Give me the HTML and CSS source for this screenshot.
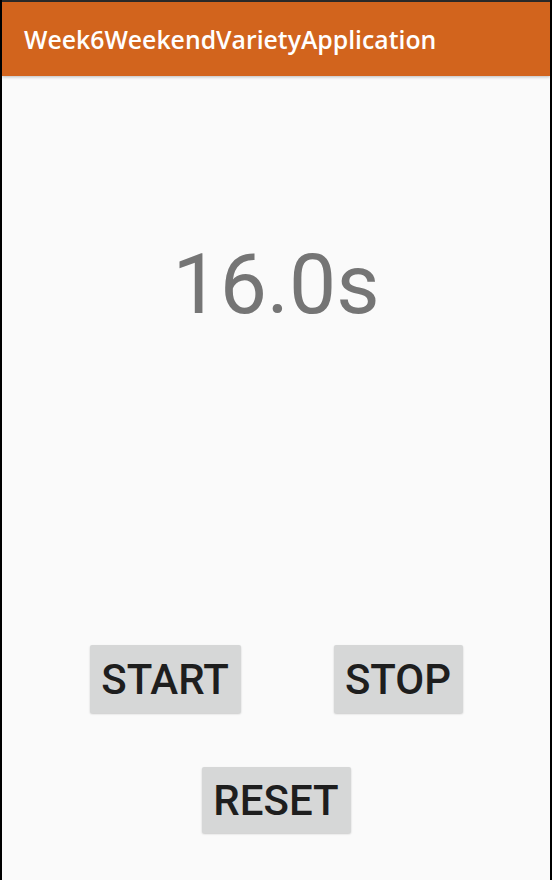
FILE: index.html
```html
<!DOCTYPE html>
<html>
<head>
<meta charset="utf-8">
<link rel="stylesheet" href="styles.css">
</head>
<body>
<div class="frame">
  <header class="appbar">
    <h1 class="title">Week6WeekendVarietyApplication</h1>
  </header>
  <main class="content">
    <div class="timer">16.0s</div>
    <div class="controls">
      <div class="row">
        <button class="btn btn-start">START</button>
        <button class="btn btn-stop">STOP</button>
      </div>
      <div class="row">
        <button class="btn btn-reset">RESET</button>
      </div>
    </div>
  </main>
</div>
</body>
</html>
```
FILE: styles.css
```css
html, body {
  margin: 0;
  padding: 0;
  background: #000;
}
.frame {
  width: 548px;
  height: 878px;
  margin: 0 2px;
  border-top: 2px solid #2a2a2a;
  background: #fafafa;
  display: flex;
  flex-direction: column;
}
.appbar {
  height: 74px;
  background: #d2641d;
  display: flex;
  align-items: center;
  padding-left: 22px;
  box-shadow: 0 1px 3px rgba(0,0,0,0.25);
  position: relative;
  z-index: 1;
}
.title {
  margin: 0;
  font-family: "Open Sans", "Noto Sans", sans-serif;
  font-weight: 600;
  font-size: 24.8px;
  color: #ffffff;
  letter-spacing: 0;
}
.content {
  flex: 1;
  display: flex;
  flex-direction: column;
  align-items: center;
}
.timer {
  margin-top: 159px;
  font-family: Roboto, sans-serif;
  font-size: 84px;
  line-height: 100px;
  color: #757575;
}
.controls {
  margin-top: 310px;
  display: flex;
  flex-direction: column;
  gap: 54px;
  align-items: center;
}
.row {
  display: flex;
  gap: 93px;
  justify-content: center;
}
.btn {
  font-family: Roboto, sans-serif;
  font-weight: 500;
  font-size: 42px;
  color: #1e1e1e;
  background: #d6d7d7;
  border: none;
  border-radius: 2px;
  height: 68px;
  padding: 0;
  box-shadow: 0 1px 2px rgba(0,0,0,0.2);
}
.btn-start { width: 151px; }
.btn-stop { width: 129px; }
.btn-reset { width: 149px; height: 66px; }
```
